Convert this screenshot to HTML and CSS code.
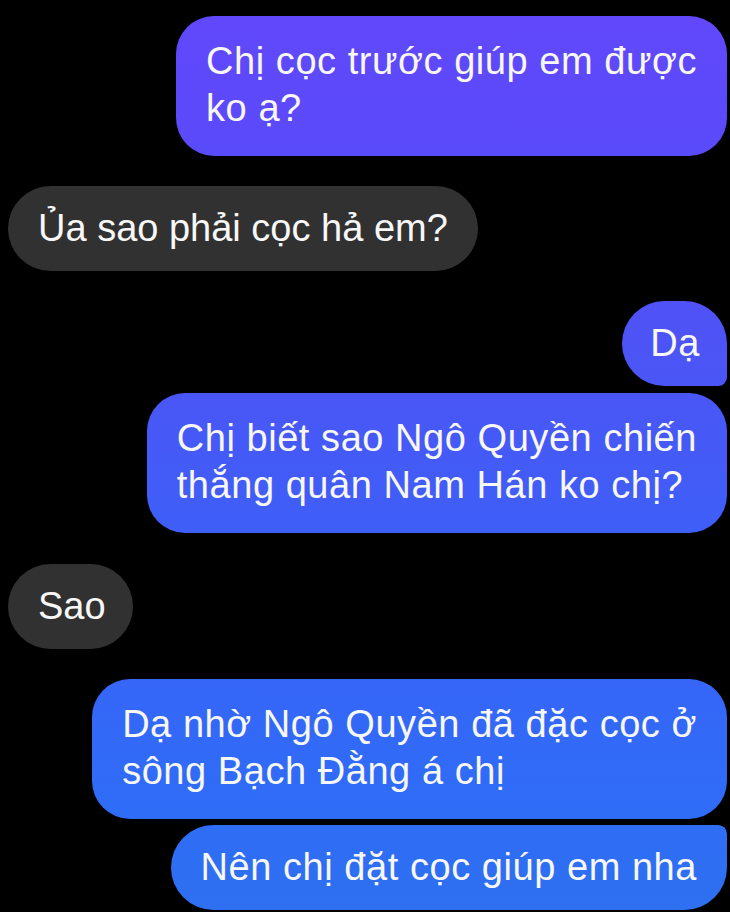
FILE: index.html
```html
<!DOCTYPE html>
<html lang="vi">
<head>
<meta charset="utf-8">
<title>Chat</title>
<link rel="stylesheet" href="styles.css">
</head>
<body>
<div class="chat">
  <div class="msg out b1 multi">Chị cọc trước giúp em được<br>ko ạ?</div>
  <div class="msg in b2">Ủa sao phải cọc hả em?</div>
  <div class="msg out b3 join-bottom">Dạ</div>
  <div class="msg out b4 multi join-top">Chị biết sao Ngô Quyền chiến<br>thắng quân Nam Hán ko chị?</div>
  <div class="msg in b5">Sao</div>
  <div class="msg out b6 multi join-bottom">Dạ nhờ Ngô Quyền đã đặc cọc ở<br>sông Bạch Đằng á chị</div>
  <div class="msg out b7 join-top">Nên chị đặt cọc giúp em nha</div>
</div>
</body>
</html>
```
FILE: styles.css
```css
html, body {
  margin: 0;
  padding: 0;
  background: #000;
  width: 730px;
  height: 912px;
  overflow: hidden;
}
.chat {
  display: flex;
  flex-direction: column;
  padding: 16px 3px 0 8px;
  font-family: "Liberation Sans", Arial, sans-serif;
  font-size: 38px;
  color: #f7f7f7;
}
.msg {
  width: fit-content;
  line-height: 47px;
  padding: 19px 30px;
  border-radius: 43px;
  white-space: nowrap;
}
.msg.multi {
  padding: 22px 30px 24px;
  border-radius: 38px;
}
.out {
  align-self: flex-end;
  letter-spacing: 0.55px;
  background: linear-gradient(to bottom, #6248fb 0px, #5b4afa 130px, #4b55f5 370px, #3f5ef8 520px, #2f6cf7 800px, #2e70f0 912px);
  background-attachment: fixed;
}
.in {
  align-self: flex-start;
  background: #313131;
}
.join-bottom { border-bottom-right-radius: 9px; }
.join-top { border-top-right-radius: 9px; }
.b2 { margin-top: 30px; }
.b3 { margin-top: 30px; padding-left: 28px; padding-right: 27px; }
.b4 { margin-top: 7px; }
.b5 { margin-top: 31px; padding-right: 27px; }
.b6 { margin-top: 30px; padding-right: 27px; }
.b7 { margin-top: 6px; }
```
